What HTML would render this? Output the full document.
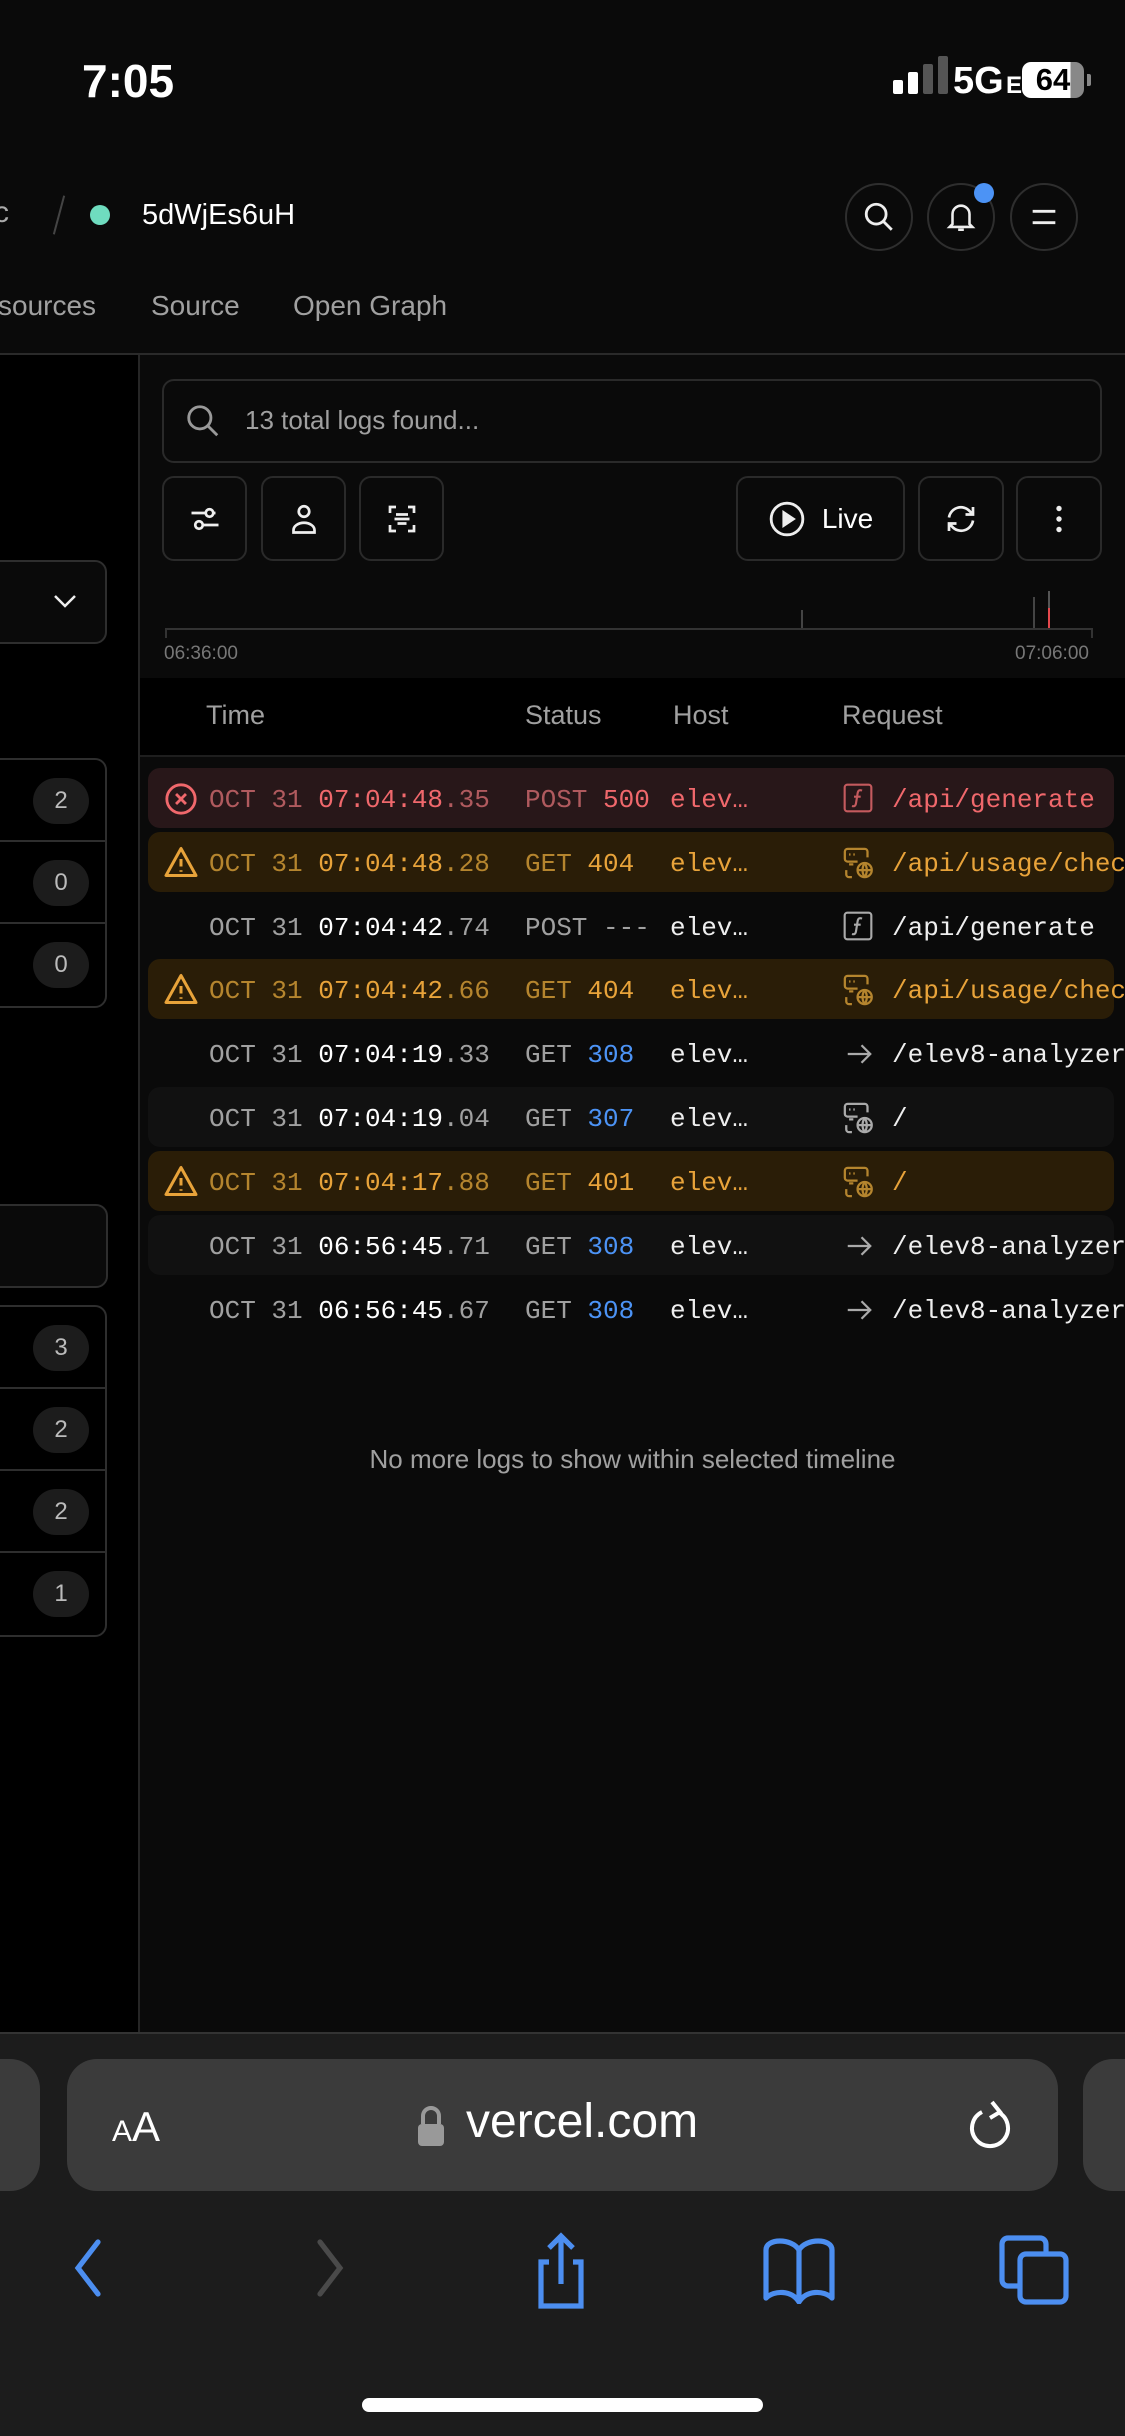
<!DOCTYPE html>
<html><head><meta charset="utf-8">
<style>
*{margin:0;padding:0;box-sizing:border-box}
body{width:1125px;height:2436px;background:#0a0a0a;position:relative;overflow:hidden;font-family:"Liberation Sans",sans-serif;color:#ededed}
.abs{position:absolute}
.mono{font-family:"Liberation Mono",monospace;font-size:26px;white-space:nowrap}
.circ{position:absolute;width:68px;height:68px;border:2px solid #2e2e2e;border-radius:50%;top:183px;display:flex;align-items:center;justify-content:center}
.btn{position:absolute;top:476px;height:85px;border:2px solid #2a2a2a;border-radius:12px;background:#0a0a0a;display:flex;align-items:center;justify-content:center}
.row{position:absolute;left:148px;width:966px;height:60px;border-radius:12px}
.row span{position:absolute;top:17px}
.lb{position:absolute;left:-20px;width:127px;border:2px solid #2e2e2e;border-radius:12px;background:#000}
.lr{height:82px;border-bottom:2px solid #2e2e2e;position:relative}
.lr:last-child{border-bottom:none}
.bd{position:absolute;right:16px;top:18px;width:56px;height:46px;border-radius:23px;background:#1c1c1c;color:#bbb;font-size:24px;display:flex;align-items:center;justify-content:center}
</style></head><body>
<!-- status bar -->
<div class="abs" style="left:82px;top:54px;font-size:46px;font-weight:600;color:#fff">7:05</div>
<div class="abs" style="left:893px;top:80px;width:10px;height:14px;background:#fff;border-radius:2px"></div>
<div class="abs" style="left:908px;top:72px;width:10px;height:22px;background:#fff;border-radius:2px"></div>
<div class="abs" style="left:923px;top:64px;width:10px;height:30px;background:#555;border-radius:2px"></div>
<div class="abs" style="left:938px;top:56px;width:10px;height:38px;background:#555;border-radius:2px"></div>
<div class="abs" style="left:953px;top:60px;font-size:38px;font-weight:600;color:#fff">5G</div>
<div class="abs" style="left:1006px;top:72px;font-size:24px;font-weight:600;color:#fff">E</div>
<div class="abs" style="left:1022px;top:62px;width:62px;height:36px;border-radius:9px;background:linear-gradient(90deg,#fff 0 78%,#888 78%);color:#000;font-size:31px;font-weight:700;text-align:center;line-height:36px">64</div>
<div class="abs" style="left:1087px;top:74px;width:4px;height:12px;background:#888;border-radius:0 2px 2px 0"></div>
<!-- header -->
<div class="abs" style="left:-6px;top:196px;font-size:30px;color:#aaa">c</div>
<div class="abs" style="left:58px;top:195px;width:2px;height:40px;background:#444;transform:rotate(15deg)"></div>
<div class="abs" style="left:90px;top:205px;width:20px;height:20px;border-radius:50%;background:#6fdcbf"></div>
<div class="abs" style="left:142px;top:199px;font-size:29px;color:#fff">5dWjEs6uH</div>
<div class="circ" style="left:845px"><svg width="34" height="34" viewBox="0 0 24 24" fill="none" stroke="#eee" stroke-width="2"><circle cx="10" cy="10" r="7"/><path d="M15 15l6 6"/></svg></div>
<div class="circ" style="left:927px"><svg width="34" height="34" viewBox="0 0 24 24" fill="none" stroke="#eee" stroke-width="1.8"><path d="M6 17V10a6 6 0 0112 0v7l2 2H4l2-2zM10 21h4"/></svg></div>
<div class="abs" style="left:974px;top:183px;width:20px;height:20px;border-radius:50%;background:#4c93f5"></div>
<div class="circ" style="left:1010px"><svg width="34" height="34" viewBox="0 0 24 24" fill="none" stroke="#eee" stroke-width="2"><path d="M4 8h16M4 16h16"/></svg></div>
<!-- tabs -->
<div class="abs" style="left:-2px;top:290px;font-size:28px;color:#a0a0a0">sources</div>
<div class="abs" style="left:151px;top:290px;font-size:28px;color:#a0a0a0">Source</div>
<div class="abs" style="left:293px;top:290px;font-size:28px;color:#a0a0a0">Open Graph</div>
<div class="abs" style="left:0;top:353px;width:1125px;height:2px;background:#2a2a2a"></div>
<!-- left panel -->
<div class="abs" style="left:0;top:355px;width:138px;height:1678px;background:#000"></div>
<div class="abs" style="left:138px;top:355px;width:2px;height:1678px;background:#262626"></div>
<div class="abs" style="left:-20px;top:560px;width:127px;height:84px;border:2px solid #2e2e2e;border-radius:12px;background:#0a0a0a"></div>
<svg class="abs" style="left:48px;top:586px" width="34" height="30" viewBox="0 0 24 24" fill="none" stroke="#eee" stroke-width="2"><path d="M4 8l8 8 8-8"/></svg>
<div class="lb" style="top:758px"><div class="lr"><div class="bd">2</div></div><div class="lr"><div class="bd">0</div></div><div class="lr"><div class="bd">0</div></div></div>
<div class="abs" style="left:-20px;top:1204px;width:128px;height:84px;border:2px solid #2e2e2e;border-radius:12px;background:#0a0a0a"></div>
<div class="lb" style="top:1305px"><div class="lr"><div class="bd">3</div></div><div class="lr"><div class="bd">2</div></div><div class="lr"><div class="bd">2</div></div><div class="lr"><div class="bd">1</div></div></div>
<!-- search -->
<div class="abs" style="left:162px;top:379px;width:940px;height:84px;border:2px solid #2a2a2a;border-radius:12px;background:#0a0a0a"></div>
<svg class="abs" style="left:184px;top:402px" width="38" height="38" viewBox="0 0 24 24" fill="none" stroke="#999" stroke-width="1.8"><circle cx="10" cy="10" r="7"/><path d="M15 15l6 6"/></svg>
<div class="abs" style="left:245px;top:405px;font-size:26px;color:#a0a0a0">13 total logs found...</div>
<!-- buttons -->
<div class="btn" style="left:162px;width:85px"><svg width="36" height="36" viewBox="0 0 24 24" fill="none" stroke="#eee" stroke-width="1.8"><path d="M3 8h16M5 16h16"/><circle cx="15" cy="8" r="2.5" fill="#0a0a0a"/><circle cx="8" cy="16" r="2.5" fill="#0a0a0a"/></svg></div>
<div class="btn" style="left:261px;width:85px"><svg width="36" height="36" viewBox="0 0 24 24" fill="none" stroke="#eee" stroke-width="1.8"><circle cx="12" cy="7" r="3.5"/><path d="M5 21h14v-1.5a7 5 0 00-14 0z"/></svg></div>
<div class="btn" style="left:359px;width:85px"><svg width="36" height="36" viewBox="0 0 24 24" fill="none" stroke="#eee" stroke-width="1.8"><path d="M4 8V4h4M16 4h4v4M20 16v4h-4M8 20H4v-4M8 9h8M7 12h10M9 15h6"/></svg></div>
<div class="btn" style="left:736px;width:169px"><svg width="38" height="38" viewBox="0 0 24 24" fill="none" stroke="#eee" stroke-width="1.8"><circle cx="12" cy="12" r="10"/><path d="M10 8l6 4-6 4z" fill="#eee"/></svg><span style="font-size:28px;color:#fff;margin-left:16px">Live</span></div>
<div class="btn" style="left:918px;width:86px"><svg width="36" height="36" viewBox="0 0 24 24" fill="none" stroke="#eee" stroke-width="1.8"><path d="M4 11a8 8 0 0114-4l2 2M20 13a8 8 0 01-14 4l-2-2M20 4v5h-5M4 20v-5h5"/></svg></div>
<div class="btn" style="left:1016px;width:86px"><svg width="36" height="36" viewBox="0 0 24 24" fill="#eee"><circle cx="12" cy="5" r="1.8"/><circle cx="12" cy="12" r="1.8"/><circle cx="12" cy="19" r="1.8"/></svg></div>
<!-- timeline -->
<div class="abs" style="left:165px;top:628px;width:928px;height:2px;background:#333"></div>
<div class="abs" style="left:165px;top:628px;width:2px;height:10px;background:#333"></div>
<div class="abs" style="left:1091px;top:628px;width:2px;height:10px;background:#333"></div>
<div class="abs" style="left:801px;top:610px;width:2px;height:18px;background:#444"></div>
<div class="abs" style="left:1033px;top:597px;width:2px;height:31px;background:#444"></div>
<div class="abs" style="left:1048px;top:591px;width:2px;height:37px;background:#555"></div>
<div class="abs" style="left:1048px;top:608px;width:2px;height:20px;background:#e5484d"></div>
<div class="abs" style="left:164px;top:643px;font-size:19px;color:#777">06:36:00</div>
<div class="abs" style="left:1015px;top:643px;font-size:19px;color:#777">07:06:00</div>
<!-- table header -->
<div class="abs" style="left:140px;top:678px;width:985px;height:78px;background:#000"></div>
<div class="abs" style="left:206px;top:700px;font-size:27px;color:#a0a0a0">Time</div>
<div class="abs" style="left:525px;top:700px;font-size:27px;color:#a0a0a0">Status</div>
<div class="abs" style="left:673px;top:700px;font-size:27px;color:#a0a0a0">Host</div>
<div class="abs" style="left:842px;top:700px;font-size:27px;color:#a0a0a0">Request</div>
<div class="abs" style="left:140px;top:755px;width:985px;height:2px;background:#1e1e1e"></div>

<!-- rows -->
<div class="mono">
<div class="row" style="top:768px;background:#281719">
 <svg class="abs" style="left:16px;top:14px" width="34" height="34" viewBox="0 0 24 24" fill="none" stroke="#f0686c" stroke-width="2"><circle cx="12" cy="12" r="10"/><path d="M8.5 8.5l7 7M15.5 8.5l-7 7"/></svg>
 <span style="left:61px;color:#b05a5e">OCT 31 <b style="font-weight:400;color:#f0686c">07:04:48</b>.35</span>
 <span style="left:377px;color:#b05a5e">POST <b style="font-weight:400;color:#f0686c">500</b></span>
 <span style="left:522px;color:#f0686c">elev…</span>
 <svg class="abs" style="left:694px;top:14px" width="32" height="32" viewBox="0 0 24 24" fill="none" stroke="#c45a5e" stroke-width="1.6"><rect x="2" y="2" width="20" height="20" rx="2"/><path d="M15 6.5c-2-1-3 0-3.3 2L10.5 16c-.3 2-1.5 2.5-3 2M9 11h5"/></svg>
 <span style="left:744px;color:#f0686c">/api/generate</span>
</div>
<div class="row" style="top:832px;background:#2a1d07">
 <svg class="abs" style="left:15px;top:12px" width="36" height="36" viewBox="0 0 24 24" fill="none" stroke="#e8a33a" stroke-width="2"><path d="M12 3L2 21h20z" stroke-linejoin="round"/><path d="M12 10v5M12 17.5v1"/></svg>
 <span style="left:61px;color:#b5852e">OCT 31 <b style="font-weight:400;color:#e8a33a">07:04:48</b>.28</span>
 <span style="left:377px;color:#b5852e">GET  <b style="font-weight:400;color:#e8a33a">404</b></span>
 <span style="left:522px;color:#e8a33a">elev…</span>
 <svg class="abs" style="left:694px;top:14px" width="34" height="34" viewBox="0 0 24 24" fill="none" stroke="#b5852e" stroke-width="1.6"><path d="M11 11H4a2 2 0 01-2-2V4a2 2 0 012-2h12a2 2 0 012 2v4M5 6h1M8 6h1M5 13h3M3 17v3a2 2 0 002 2h2"/><circle cx="16" cy="17" r="5"/><path d="M11 17h10M16 12c-2 3-2 7 0 10M16 12c2 3 2 7 0 10"/></svg>
 <span style="left:744px;color:#e8a33a">/api/usage/check</span>
</div>
<div class="row" style="top:896px">
 <span style="left:61px;color:#a0a0a0">OCT 31 <b style="font-weight:400;color:#fff">07:04:42</b>.74</span>
 <span style="left:377px;color:#a0a0a0">POST ---</span>
 <span style="left:522px;color:#eee">elev…</span>
 <svg class="abs" style="left:694px;top:14px" width="32" height="32" viewBox="0 0 24 24" fill="none" stroke="#aaa" stroke-width="1.6"><rect x="2" y="2" width="20" height="20" rx="2"/><path d="M15 6.5c-2-1-3 0-3.3 2L10.5 16c-.3 2-1.5 2.5-3 2M9 11h5"/></svg>
 <span style="left:744px;color:#eee">/api/generate</span>
</div>
<div class="row" style="top:959px;background:#2a1d07">
 <svg class="abs" style="left:15px;top:12px" width="36" height="36" viewBox="0 0 24 24" fill="none" stroke="#e8a33a" stroke-width="2"><path d="M12 3L2 21h20z" stroke-linejoin="round"/><path d="M12 10v5M12 17.5v1"/></svg>
 <span style="left:61px;color:#b5852e">OCT 31 <b style="font-weight:400;color:#e8a33a">07:04:42</b>.66</span>
 <span style="left:377px;color:#b5852e">GET  <b style="font-weight:400;color:#e8a33a">404</b></span>
 <span style="left:522px;color:#e8a33a">elev…</span>
 <svg class="abs" style="left:694px;top:14px" width="34" height="34" viewBox="0 0 24 24" fill="none" stroke="#b5852e" stroke-width="1.6"><path d="M11 11H4a2 2 0 01-2-2V4a2 2 0 012-2h12a2 2 0 012 2v4M5 6h1M8 6h1M5 13h3M3 17v3a2 2 0 002 2h2"/><circle cx="16" cy="17" r="5"/><path d="M11 17h10M16 12c-2 3-2 7 0 10M16 12c2 3 2 7 0 10"/></svg>
 <span style="left:744px;color:#e8a33a">/api/usage/check</span>
</div>
<div class="row" style="top:1023px">
 <span style="left:61px;color:#a0a0a0">OCT 31 <b style="font-weight:400;color:#fff">07:04:19</b>.33</span>
 <span style="left:377px;color:#a0a0a0">GET  <b style="font-weight:400;color:#4c93f5">308</b></span>
 <span style="left:522px;color:#eee">elev…</span>
 <svg class="abs" style="left:694px;top:16px" width="34" height="30" viewBox="0 0 24 24" fill="none" stroke="#aaa" stroke-width="1.8"><path d="M3 12h18M14 5l7 7-7 7"/></svg>
 <span style="left:744px;color:#eee">/elev8-analyzer</span>
</div>
<div class="row" style="top:1087px;background:#111">
 <span style="left:61px;color:#a0a0a0">OCT 31 <b style="font-weight:400;color:#fff">07:04:19</b>.04</span>
 <span style="left:377px;color:#a0a0a0">GET  <b style="font-weight:400;color:#4c93f5">307</b></span>
 <span style="left:522px;color:#eee">elev…</span>
 <svg class="abs" style="left:694px;top:14px" width="34" height="34" viewBox="0 0 24 24" fill="none" stroke="#aaa" stroke-width="1.6"><path d="M11 11H4a2 2 0 01-2-2V4a2 2 0 012-2h12a2 2 0 012 2v4M5 6h1M8 6h1M5 13h3M3 17v3a2 2 0 002 2h2"/><circle cx="16" cy="17" r="5"/><path d="M11 17h10M16 12c-2 3-2 7 0 10M16 12c2 3 2 7 0 10"/></svg>
 <span style="left:744px;color:#eee">/</span>
</div>
<div class="row" style="top:1151px;background:#2a1d07">
 <svg class="abs" style="left:15px;top:12px" width="36" height="36" viewBox="0 0 24 24" fill="none" stroke="#e8a33a" stroke-width="2"><path d="M12 3L2 21h20z" stroke-linejoin="round"/><path d="M12 10v5M12 17.5v1"/></svg>
 <span style="left:61px;color:#b5852e">OCT 31 <b style="font-weight:400;color:#e8a33a">07:04:17</b>.88</span>
 <span style="left:377px;color:#b5852e">GET  <b style="font-weight:400;color:#e8a33a">401</b></span>
 <span style="left:522px;color:#e8a33a">elev…</span>
 <svg class="abs" style="left:694px;top:14px" width="34" height="34" viewBox="0 0 24 24" fill="none" stroke="#b5852e" stroke-width="1.6"><path d="M11 11H4a2 2 0 01-2-2V4a2 2 0 012-2h12a2 2 0 012 2v4M5 6h1M8 6h1M5 13h3M3 17v3a2 2 0 002 2h2"/><circle cx="16" cy="17" r="5"/><path d="M11 17h10M16 12c-2 3-2 7 0 10M16 12c2 3 2 7 0 10"/></svg>
 <span style="left:744px;color:#e8a33a">/</span>
</div>
<div class="row" style="top:1215px;background:#111">
 <span style="left:61px;color:#a0a0a0">OCT 31 <b style="font-weight:400;color:#fff">06:56:45</b>.71</span>
 <span style="left:377px;color:#a0a0a0">GET  <b style="font-weight:400;color:#4c93f5">308</b></span>
 <span style="left:522px;color:#eee">elev…</span>
 <svg class="abs" style="left:694px;top:16px" width="34" height="30" viewBox="0 0 24 24" fill="none" stroke="#aaa" stroke-width="1.8"><path d="M3 12h18M14 5l7 7-7 7"/></svg>
 <span style="left:744px;color:#eee">/elev8-analyzer</span>
</div>
<div class="row" style="top:1279px">
 <span style="left:61px;color:#a0a0a0">OCT 31 <b style="font-weight:400;color:#fff">06:56:45</b>.67</span>
 <span style="left:377px;color:#a0a0a0">GET  <b style="font-weight:400;color:#4c93f5">308</b></span>
 <span style="left:522px;color:#eee">elev…</span>
 <svg class="abs" style="left:694px;top:16px" width="34" height="30" viewBox="0 0 24 24" fill="none" stroke="#aaa" stroke-width="1.8"><path d="M3 12h18M14 5l7 7-7 7"/></svg>
 <span style="left:744px;color:#eee">/elev8-analyzer</span>
</div>
</div>
<div class="abs" style="left:140px;top:1444px;width:985px;text-align:center;font-size:26px;color:#a0a0a0">No more logs to show within selected timeline</div>

<!-- safari bottom -->
<div class="abs" style="left:0;top:2032px;width:1125px;height:404px;background:#1c1c1c;border-top:2px solid #333"></div>
<div class="abs" style="left:-60px;top:2059px;width:100px;height:132px;border-radius:30px;background:#3b3b3b"></div>
<div class="abs" style="left:1083px;top:2059px;width:100px;height:132px;border-radius:30px;background:#3b3b3b"></div>
<div class="abs" style="left:67px;top:2059px;width:991px;height:132px;border-radius:30px;background:#3b3b3b"></div>
<div class="abs" style="left:112px;top:2103px;color:#fff;font-size:42px"><span style="font-size:30px">A</span>A</div>
<svg class="abs" style="left:415px;top:2106px" width="32" height="42" viewBox="0 0 16 21"><path d="M4 9V5a4 4 0 018 0v4" fill="none" stroke="#999" stroke-width="2"/><rect x="1.5" y="9" width="13" height="11" rx="2" fill="#999"/></svg>
<div class="abs" style="left:466px;top:2094px;color:#fff;font-size:48px">vercel.com</div>
<svg class="abs" style="left:966px;top:2098px" width="48" height="54" viewBox="0 0 24 27" fill="none" stroke="#fff" stroke-width="2"><path d="M16 7a9 9 0 11-8 0"/><path d="M13 2l4 5-5 3"/></svg>
<svg class="abs" style="left:68px;top:2236px" width="40" height="64" viewBox="0 0 20 32" fill="none" stroke="#4c8ef0" stroke-width="2.6" stroke-linecap="round"><path d="M15 3L5 16l10 13"/></svg>
<svg class="abs" style="left:310px;top:2236px" width="40" height="64" viewBox="0 0 20 32" fill="none" stroke="#4a4a4a" stroke-width="2.6" stroke-linecap="round"><path d="M5 3l10 13L5 29"/></svg>
<svg class="abs" style="left:531px;top:2230px" width="60" height="82" viewBox="0 0 30 41" fill="none" stroke="#4c8ef0" stroke-width="2.6"><path d="M9 16H5v22h20V16h-4"/><path d="M15 27V3M9 9l6-6 6 6"/></svg>
<svg class="abs" style="left:762px;top:2236px" width="74" height="68" viewBox="0 0 37 34" fill="none" stroke="#4c8ef0" stroke-width="2.6" stroke-linejoin="round"><path d="M18.5 7C15 1 2 1 2 7v24c4-4 13-4 16.5 2C22 27 31 27 35 31V7c0-6-13-6-16.5 0zM18.5 7v26"/></svg>
<svg class="abs" style="left:998px;top:2234px" width="72" height="72" viewBox="0 0 36 36" fill="none" stroke="#4c8ef0" stroke-width="2.6"><rect x="2" y="2" width="22" height="24" rx="3"/><rect x="11" y="10" width="23" height="24" rx="3" fill="#1c1c1c"/></svg>
<div class="abs" style="left:362px;top:2398px;width:401px;height:14px;border-radius:7px;background:#fff"></div>
</body></html>
